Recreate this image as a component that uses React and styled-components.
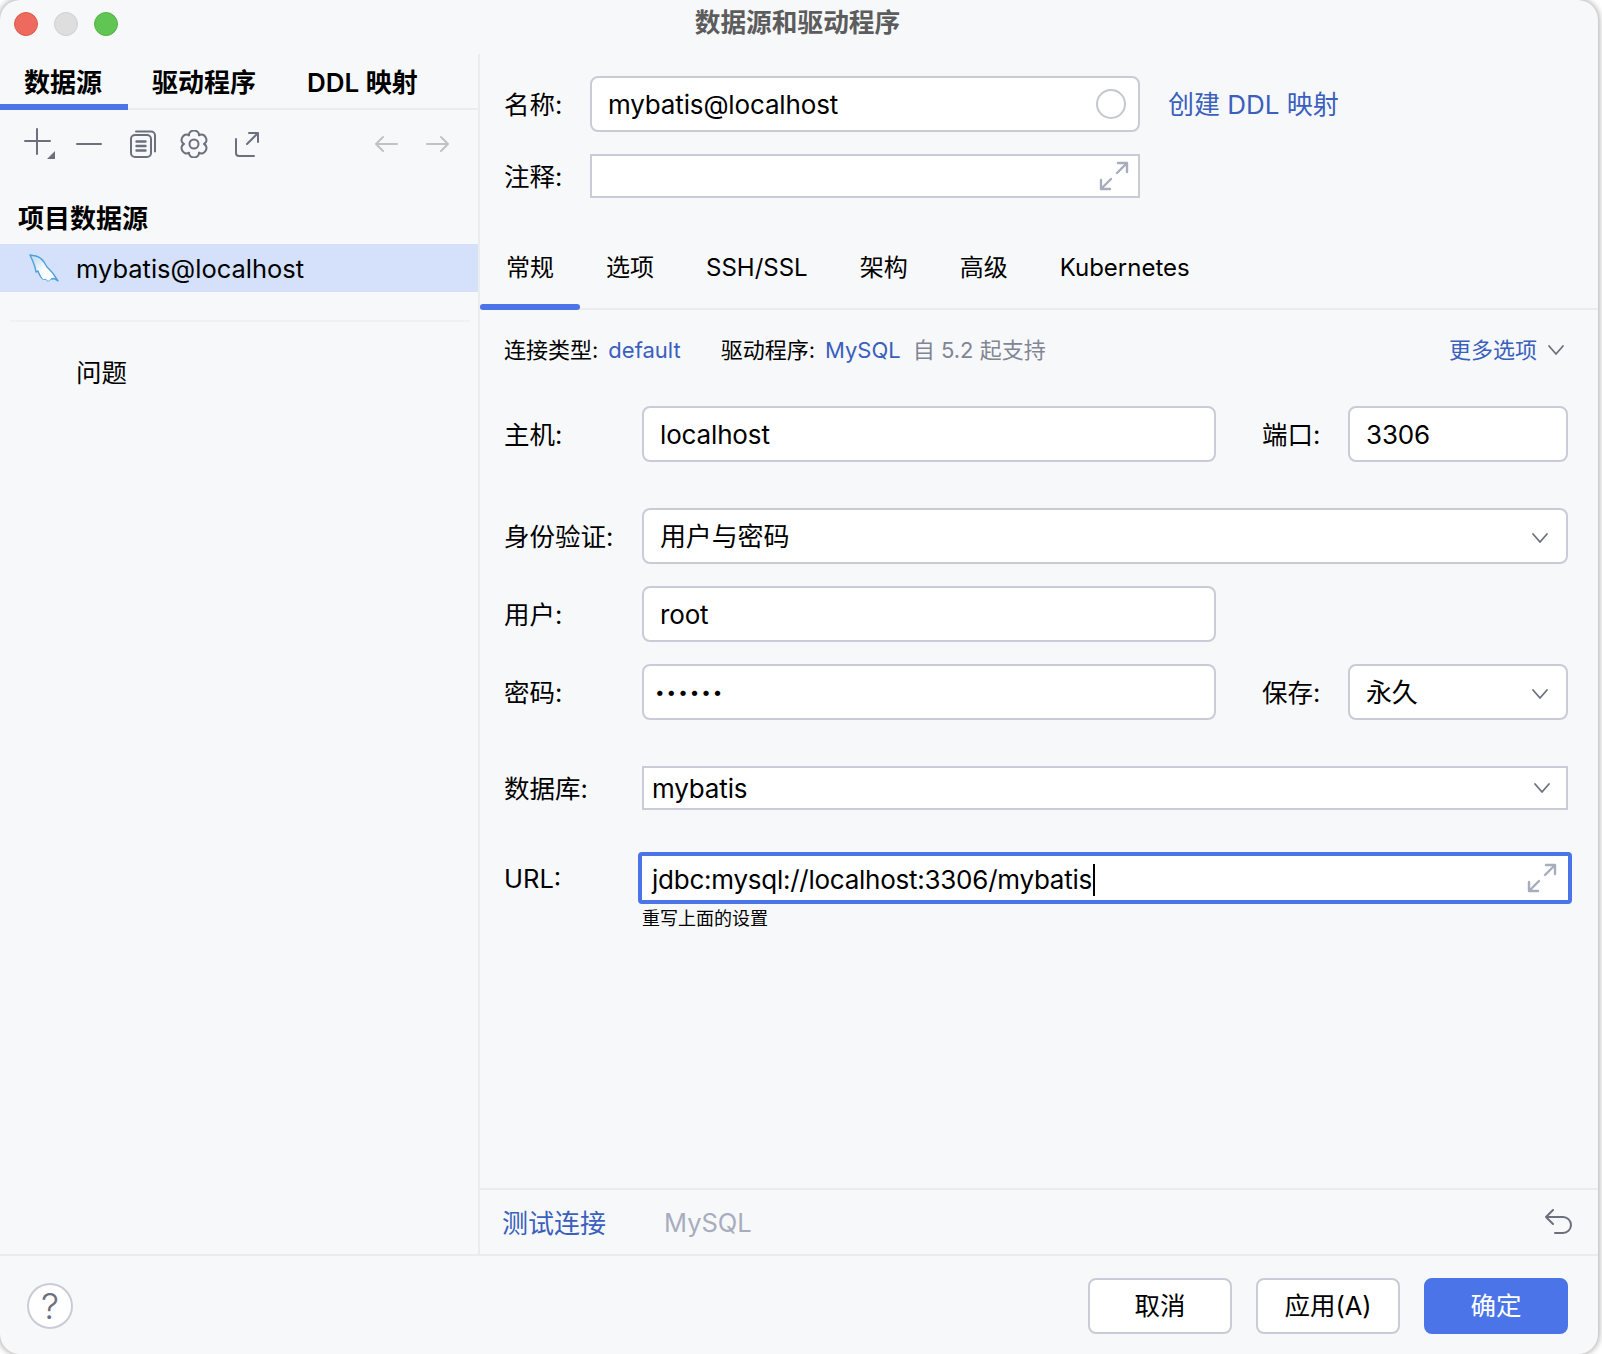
import React from 'react';
import styled, { createGlobalStyle } from 'styled-components';

const Global = createGlobalStyle`
  html, body { margin: 0; padding: 0; background: #fff; }
  body { font-family: Inter, "Noto Sans CJK SC", sans-serif; color: #000; }
  * { box-sizing: border-box; }
`;

const blue = '#4a74e8';
const link = '#3a5fbd';
const line = '#ebecf0';
const stroke = '#c9ccd6';
const icon = '#6c707e';

const Window = styled.div`
  width: 1598px;
  height: 1354px;
  background: #f7f8fa;
  border-radius: 20px;
  box-shadow: 0 0 6px 1px rgba(0, 0, 0, .35);
  display: flex;
  flex-direction: column;
  overflow: hidden;
`;

const TitleBar = styled.div`
  height: 54px;
  flex: none;
  display: flex;
  align-items: flex-start;
  position: relative;
`;

const Lights = styled.div`
  display: flex;
  gap: 16px;
  padding: 12px 0 0 14px;
`;

const Light = styled.span`
  width: 24px;
  height: 24px;
  border-radius: 50%;
  background: ${p => p.$color};
  border: 1px solid ${p => p.$edge};
`;

const Title = styled.div`
  position: absolute;
  left: 0;
  right: 0;
  top: 5px;
  padding-right: 3px;
  text-align: center;
  font-size: 25.7px;
  line-height: 36px;
  font-weight: 600;
  color: #5c5c5c;
`;

const Main = styled.div`
  flex: 1;
  display: flex;
  min-height: 0;
`;

const Side = styled.div`
  width: 480px;
  flex: none;
  border-right: 2px solid ${line};
  display: flex;
  flex-direction: column;
`;

const SideTabs = styled.div`
  height: 56px;
  flex: none;
  display: flex;
  border-bottom: 2px solid ${line};
`;

const SideTab = styled.div`
  width: ${p => p.$w}px;
  flex: none;
  height: 56px;
  padding: 11px 0 0 ${p => p.$pad}px;
  font-size: 26px;
  line-height: 36px;
  font-weight: 600;
  white-space: nowrap;
  border-bottom: ${p => (p.$active ? `6px solid ${blue}` : 'none')};
`;

const Toolbar = styled.div`
  height: 68px;
  display: flex;
  align-items: center;
  padding-left: 24px;
  padding-right: 28px;
`;

const ToolSlot = styled.div`
  width: ${p => p.$w || 52}px;
  flex: none;
  display: flex;
  align-items: center;
`;

const GroupTitle = styled.div`
  font-size: 26px;
  line-height: 36px;
  font-weight: 600;
  padding: 23px 0 0 18px;
  height: 66px;
`;

const SourceRow = styled.div`
  height: 48px;
  background: #d5e1fb;
  display: flex;
  align-items: center;
  padding-left: 29px;
  gap: 17px;
  font-size: 25.5px;
`;

const SideRule = styled.div`
  height: 2px;
  margin: 28px 8px 0 10px;
  background: #f0f1f4;
`;

const Problems = styled.div`
  padding: 33px 0 0 76px;
  font-size: 25.5px;
  line-height: 36px;
`;

const Panel = styled.div`
  flex: 1;
  min-width: 0;
  display: flex;
  flex-direction: column;
`;

const Head = styled.div`
  padding: 22px 30px 0 24px;
`;

const Row = styled.div`
  display: flex;
  align-items: center;
  margin-top: ${p => p.$gap || 0}px;
`;

const Label = styled.div`
  width: ${p => p.$w}px;
  flex: none;
  font-size: 25.5px;
  line-height: 36px;
  padding-top: 2px;
  margin-left: ${p => p.$ml || 0}px;
`;

const Field = styled.div`
  width: ${p => (p.$w ? `${p.$w}px` : 'auto')};
  flex: ${p => (p.$w ? 'none' : '1')};
  height: ${p => p.$h || 56}px;
  background: #fff;
  border: 2px solid ${stroke};
  border-radius: ${p => (p.$square ? 0 : 8)}px;
  display: flex;
  align-items: center;
  justify-content: space-between;
  padding: 0 ${p => p.$right || 16}px 0 ${p => p.$left || 16}px;
  font-size: 26px;
  letter-spacing: -.15px;
  white-space: nowrap;
`;

const UrlField = styled(Field)`
  height: 52px;
  border: 4px solid ${blue};
  border-radius: 4px;
  margin: 0 -4px 0 -4px;
  padding: 0 11px 0 10px;
  letter-spacing: -.25px;
`;

const UrlText = styled.span`
  padding-top: 3px;
`;

const CjkValue = styled.span`
  padding-bottom: 3px;
`;

const Drop = styled.span`
  padding-top: 3px;
`;

const Caret = styled.span`
  display: inline-block;
  width: 2px;
  height: 32px;
  background: #000;
  vertical-align: -7px;
  margin-left: 1px;
`;

const Dots = styled.span`
  font-size: 17px;
  letter-spacing: 2px;
  line-height: 1;
  margin-left: -5px;
  padding-top: 1px;
`;

const Status = styled.span`
  width: 30px;
  height: 30px;
  border-radius: 50%;
  border: 2px solid #c4c7ce;
`;

const LinkText = styled.div`
  color: ${link};
  font-size: 26px;
  margin-left: 28px;
  line-height: 36px;
  padding-top: 2px;
`;

const Tabs = styled.div`
  margin-top: 22px;
  height: 90px;
  display: flex;
  border-bottom: 2px solid ${line};
`;

const Tab = styled.div`
  height: 90px;
  padding: 30px 26px 0;
  font-size: 24px;
  line-height: 36px;
  white-space: nowrap;
  position: relative;
  &::after {
    content: '';
    display: ${p => (p.$active ? 'block' : 'none')};
    position: absolute;
    left: 0;
    right: 0;
    bottom: 0;
    height: 6px;
    border-radius: 3px;
    background: ${blue};
  }
`;

const Body = styled.div`
  flex: 1;
  padding: 0 30px 0 24px;
`;

const InfoRow = styled.div`
  height: 34px;
  margin-top: 23px;
  display: flex;
  align-items: center;
  font-size: 22px;
  line-height: 34px;
  white-space: nowrap;
`;

const Blue = styled.span`
  color: ${link};
  margin-left: ${p => p.$ml || 0}px;
`;

const Muted = styled.span`
  color: #818594;
  margin-left: ${p => p.$ml || 0}px;
`;

const Plain = styled.span`
  margin-left: ${p => p.$ml || 0}px;
`;

const More = styled.div`
  margin-left: auto;
  display: flex;
  align-items: center;
  gap: 10px;
  padding-right: 3px;
  color: ${link};
`;

const Caption = styled.div`
  margin: 2px 0 0 138px;
  font-size: 18px;
  line-height: 26px;
`;

const TestBar = styled.div`
  height: 66px;
  flex: none;
  border-top: 2px solid ${line};
  display: flex;
  align-items: center;
  padding: 0 26px 1px 22px;
  font-size: 26px;
`;

const TestLink = styled.span`
  color: ${link};
`;

const DbName = styled.span`
  color: #a8adbd;
  font-size: 25.5px;
  padding-top: 2px;
  margin-left: 58px;
  flex: 1;
`;

const Footer = styled.div`
  height: 100px;
  flex: none;
  border-top: 2px solid ${line};
  display: flex;
  align-items: flex-start;
  padding: 22px 30px 0 27px;
`;

const Help = styled.div`
  width: 46px;
  height: 46px;
  margin-top: 5px;
  border-radius: 50%;
  border: 2px solid ${stroke};
  background: #fff;
  color: ${icon};
  font-size: 36px;
  font-weight: 300;
  line-height: 42px;
  text-align: center;
  margin-right: auto;
`;

const Button = styled.div`
  width: 144px;
  height: 56px;
  margin-left: 24px;
  border-radius: 8px;
  border: 2px solid ${p => (p.$primary ? blue : stroke)};
  background: ${p => (p.$primary ? blue : '#fff')};
  color: ${p => (p.$primary ? '#fff' : '#000')};
  font-size: 25.5px;
  padding-bottom: 5px;
  display: flex;
  align-items: center;
  justify-content: center;
`;

const Svg = ({ w, h, color = icon, width = 2, children }) => (
  <svg width={w} height={h} viewBox={`0 0 ${w} ${h}`} fill="none" stroke={color} strokeWidth={width} strokeLinecap="round" strokeLinejoin="round" style={{ flex: 'none', display: 'block' }}>
    {children}
  </svg>
);

const Chevron = ({ color = icon }) => (
  <Svg w={18} h={12} color={color} width={1.8}>
    <path d="M2 2l7 8 7-8" />
  </Svg>
);

const Expand = () => (
  <Svg w={30} h={30} color="#a8adbd" width={2.4}>
    <path d="M18 12L28 2M19 2h9v9M12 18L2 28M2 19v9h9" />
  </Svg>
);

// six soft lobes around the middle, same outline as the IDE settings icon
const gearPath = (() => {
  const at = (deg, r) => {
    const a = (deg * Math.PI) / 180;
    return `${(14 + r * Math.cos(a)).toFixed(2)} ${(14 + r * Math.sin(a)).toFixed(2)}`;
  };
  let d = `M${at(-120, 10)}`;
  for (let i = 0; i < 6; i++) {
    const a = -120 + 60 * i;
    d += ` C${at(a + 10, 16)} ${at(a + 50, 16)} ${at(a + 60, 10)}`;
  }
  return d + 'z';
})();

const Dolphin = () => (
  <svg width="30" height="30" viewBox="9 7 30 30" style={{ flex: 'none', display: 'block' }}>
    <defs>
      <linearGradient id="dolphinFill" x1="0" y1="0" x2="1" y2="1">
        <stop offset=".15" stopColor="#c6def6" />
        <stop offset=".55" stopColor="#fff" />
      </linearGradient>
    </defs>
    <path d="M10 9L13 9.500C17 9.500 21 12 24 16L27 21C30 24 33 27 34 29L38 35L34 32.500L31 33L28 35L26 33L23 33C20 31 19 28 18 25L16 26L15 21C14 18 12 13 10 9z" fill="url(#dolphinFill)" stroke="#4aa0d8" strokeWidth="1.400" strokeLinejoin="round" />
    <path d="M21 30l2 3 3 0 2 2 3-2-1-4-6-2z" fill="#fff" />
  </svg>
);

export default function App() {
  return (
    <>
      <Global />
      <Window>
        <TitleBar>
          <Lights>
            <Light $color="#ee6a5f" $edge="#dc5b50" />
            <Light $color="#dededf" $edge="#cfcfd0" />
            <Light $color="#61c554" $edge="#54b247" />
          </Lights>
          <Title>数据源和驱动程序</Title>
        </TitleBar>
        <Main>
          <Side>
            <SideTabs>
              <SideTab $w={128} $pad={24} $active>数据源</SideTab>
              <SideTab $w={155} $pad={24}>驱动程序</SideTab>
              <SideTab $w={150} $pad={24}>DDL 映射</SideTab>
            </SideTabs>
            <Toolbar>
              <ToolSlot>
                <Svg w={32} h={32}>
                  <path d="M13 1v25M1 13h25" />
                  <path d="M31 23v8h-8z" fill={icon} stroke="none" />
                </Svg>
              </ToolSlot>
              <ToolSlot $w={54}>
                <Svg w={26} h={4}><path d="M1 2h24" /></Svg>
              </ToolSlot>
              <ToolSlot $w={50}>
                <Svg w={26} h={28}>
                  <rect x="1" y="5" width="20" height="22" rx="4" />
                  <path d="M6 1.500h15a4 4 0 0 1 4 4v16" />
                  <path d="M6.500 11.500h9M6.500 16h9M6.500 20.500h9" strokeWidth="2.400" />
                </Svg>
              </ToolSlot>
              <ToolSlot $w={54}>
                <Svg w={28} h={28}>
                  <path d={gearPath} />
                  <circle cx="14" cy="14" r="4.500" />
                </Svg>
              </ToolSlot>
              <ToolSlot $w={140}>
                <Svg w={26} h={26}>
                  <path d="M2 8v14a3 3 0 0 0 3 3h15M13 13L24 2M15 2h9v9" />
                </Svg>
              </ToolSlot>
              <ToolSlot $w={52}>
                <Svg w={24} h={18} color="#c0c2c8">
                  <path d="M23 9H2M9 2L2 9l7 7" />
                </Svg>
              </ToolSlot>
              <ToolSlot $w={24}>
                <Svg w={24} h={18} color="#c0c2c8">
                  <path d="M1 9h21M15 2l7 7-7 7" />
                </Svg>
              </ToolSlot>
            </Toolbar>
            <GroupTitle>项目数据源</GroupTitle>
            <SourceRow>
              <Dolphin />
              mybatis@localhost
            </SourceRow>
            <SideRule />
            <Problems>问题</Problems>
          </Side>
          <Panel>
            <Head>
              <Row>
                <Label $w={86}>名称:</Label>
                <Field $w={550} $right={12}>
                  mybatis@localhost
                  <Status />
                </Field>
                <LinkText>创建 DDL 映射</LinkText>
              </Row>
              <Row $gap={22}>
                <Label $w={86}>注释:</Label>
                <Field $w={550} $h={44} $square $right={9}>
                  <span />
                  <Expand />
                </Field>
              </Row>
            </Head>
            <Tabs>
              <Tab $active>常规</Tab>
              <Tab>选项</Tab>
              <Tab>SSH/SSL</Tab>
              <Tab>架构</Tab>
              <Tab>高级</Tab>
              <Tab>Kubernetes</Tab>
            </Tabs>
            <Body>
              <InfoRow>
                连接类型:
                <Blue $ml={10}>default</Blue>
                <Plain $ml={40}>驱动程序:</Plain>
                <Blue $ml={10}>MySQL</Blue>
                <Muted $ml={12}>自 5.2 起支持</Muted>
                <More>
                  更多选项
                  <Chevron />
                </More>
              </InfoRow>
              <Row $gap={39}>
                <Label $w={138}>主机:</Label>
                <Field $w={574}>localhost</Field>
                <Label $w={86} $ml={46}>端口:</Label>
                <Field>3306</Field>
              </Row>
              <Row $gap={46}>
                <Label $w={138}>身份验证:</Label>
                <Field $right={17}>
                  <CjkValue>用户与密码</CjkValue>
                  <Drop><Chevron /></Drop>
                </Field>
              </Row>
              <Row $gap={22}>
                <Label $w={138}>用户:</Label>
                <Field $w={574}>root</Field>
              </Row>
              <Row $gap={22}>
                <Label $w={138}>密码:</Label>
                <Field $w={574}><Dots>••••••</Dots></Field>
                <Label $w={86} $ml={46}>保存:</Label>
                <Field $right={17}>
                  <CjkValue>永久</CjkValue>
                  <Drop><Chevron /></Drop>
                </Field>
              </Row>
              <Row $gap={46}>
                <Label $w={138}>数据库:</Label>
                <Field $h={44} $square $left={8} $right={15}>
                  mybatis
                  <Chevron />
                </Field>
              </Row>
              <Row $gap={42}>
                <Label $w={138}>URL:</Label>
                <UrlField>
                  <UrlText>jdbc:mysql://localhost:3306/mybatis<Caret /></UrlText>
                  <Expand />
                </UrlField>
              </Row>
              <Caption>重写上面的设置</Caption>
            </Body>
            <TestBar>
              <TestLink>测试连接</TestLink>
              <DbName>MySQL</DbName>
              <Svg w={28} h={26}>
                <path d="M9 1L2 8l7 7M2 8h17a7 7 0 0 1 0 16h-8" />
              </Svg>
            </TestBar>
          </Panel>
        </Main>
        <Footer>
          <Help>?</Help>
          <Button>取消</Button>
          <Button>应用(A)</Button>
          <Button $primary>确定</Button>
        </Footer>
      </Window>
    </>
  );
}
